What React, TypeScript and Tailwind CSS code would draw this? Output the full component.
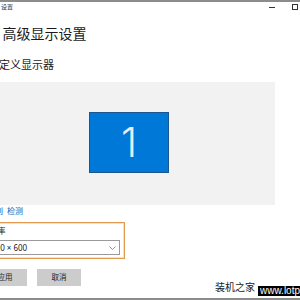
export default function App() {
  return (
    <div className="relative w-[300px] h-[300px] overflow-hidden bg-white flex flex-col font-['Noto_Sans','Noto_Sans_CJK_SC',sans-serif] text-[#1a1a1a]">
      {/* window top edge */}
      <div className="h-[2px] bg-[#8c8c8c]" />

      {/* title bar */}
      <div className="flex items-center justify-between h-[8px] mt-[1px]">
        <span className="ml-[1px] text-[6px] leading-[8px] text-[#333]">设置</span>
        <div className="flex items-center gap-[17px] mr-[2px]">
          <div className="w-[6px] h-px bg-[#333]" />
          <div className="w-[6px] h-[6px] border border-[#333]" />
        </div>
      </div>

      {/* heading */}
      <h1 className="mt-[15px] pl-[2.5px] text-[14px] leading-[16px] font-normal whitespace-nowrap">高级显示设置</h1>

      {/* section */}
      <h2 className="mt-[15px] ml-[-1px] text-[11px] leading-[15px] font-normal whitespace-nowrap">定义显示器</h2>

      {/* display preview */}
      <div className="mt-[10px] w-[275px] h-[123px] shrink-0 bg-[#f2f2f2] pl-[89px] pt-[30px]">
        <div className="w-[80px] h-[61px] bg-[#0078d7] border border-[#1d558f] flex items-center justify-center">
          <span className="font-['Inter',sans-serif] font-light text-[41px] leading-none text-[#e6eef8]">1</span>
        </div>
      </div>

      {/* links */}
      <div className="mt-[1px] flex gap-[4px] text-[8px] leading-[10px] text-[#0067c0] whitespace-nowrap">
        <span className="ml-[-13px]">识别</span>
        <span>检测</span>
      </div>

      {/* resolution */}
      <div className="mt-[6px] ml-[-10px] w-[135px] h-[37px] shrink-0 border border-[#e19a50] shadow-[inset_0_0_0_1px_#f7e0c6] bg-white pt-[4px]">
        <div className="ml-[-8px] text-[7.5px] leading-[9px] whitespace-nowrap">分辨率</div>
        <div className="mt-[4px] w-[129px] h-[15px] border border-[#9a9a9a] bg-white flex items-center justify-between pr-[3px]">
          <span className="ml-[-1px] text-[8px] leading-[10px] whitespace-nowrap">800 × 600</span>
          <svg width="7" height="4" viewBox="0 0 7 4" fill="none">
            <path d="M0.5 0.5 L3.5 3.5 L6.5 0.5" stroke="#777" strokeWidth="0.8" />
          </svg>
        </div>
      </div>

      {/* buttons */}
      <div className="mt-[10px] ml-[-17px] flex gap-[10px]">
        <button className="w-[44px] h-[17px] bg-[#cccccc] text-[7.5px] leading-[9px] text-[#222] flex items-center justify-center">应用</button>
        <button className="w-[44px] h-[17px] bg-[#cccccc] text-[7.5px] leading-[9px] text-[#222] flex items-center justify-center">取消</button>
      </div>

      {/* window bottom edge */}
      <div className="mt-auto h-[2px] bg-[#8c8c8c]" />

      {/* watermark */}
      <div className="absolute left-[215px] top-[281px] flex items-start gap-[3px] whitespace-nowrap">
        <span className="text-[10px] leading-[12px] text-[#222]">装机之家</span>
        <span className="mt-[5px] h-[10px] bg-black px-[2px] font-['Liberation_Sans',sans-serif] text-[10px] leading-[10px] text-white">www.lotpc.com</span>
      </div>
    </div>
  );
}
